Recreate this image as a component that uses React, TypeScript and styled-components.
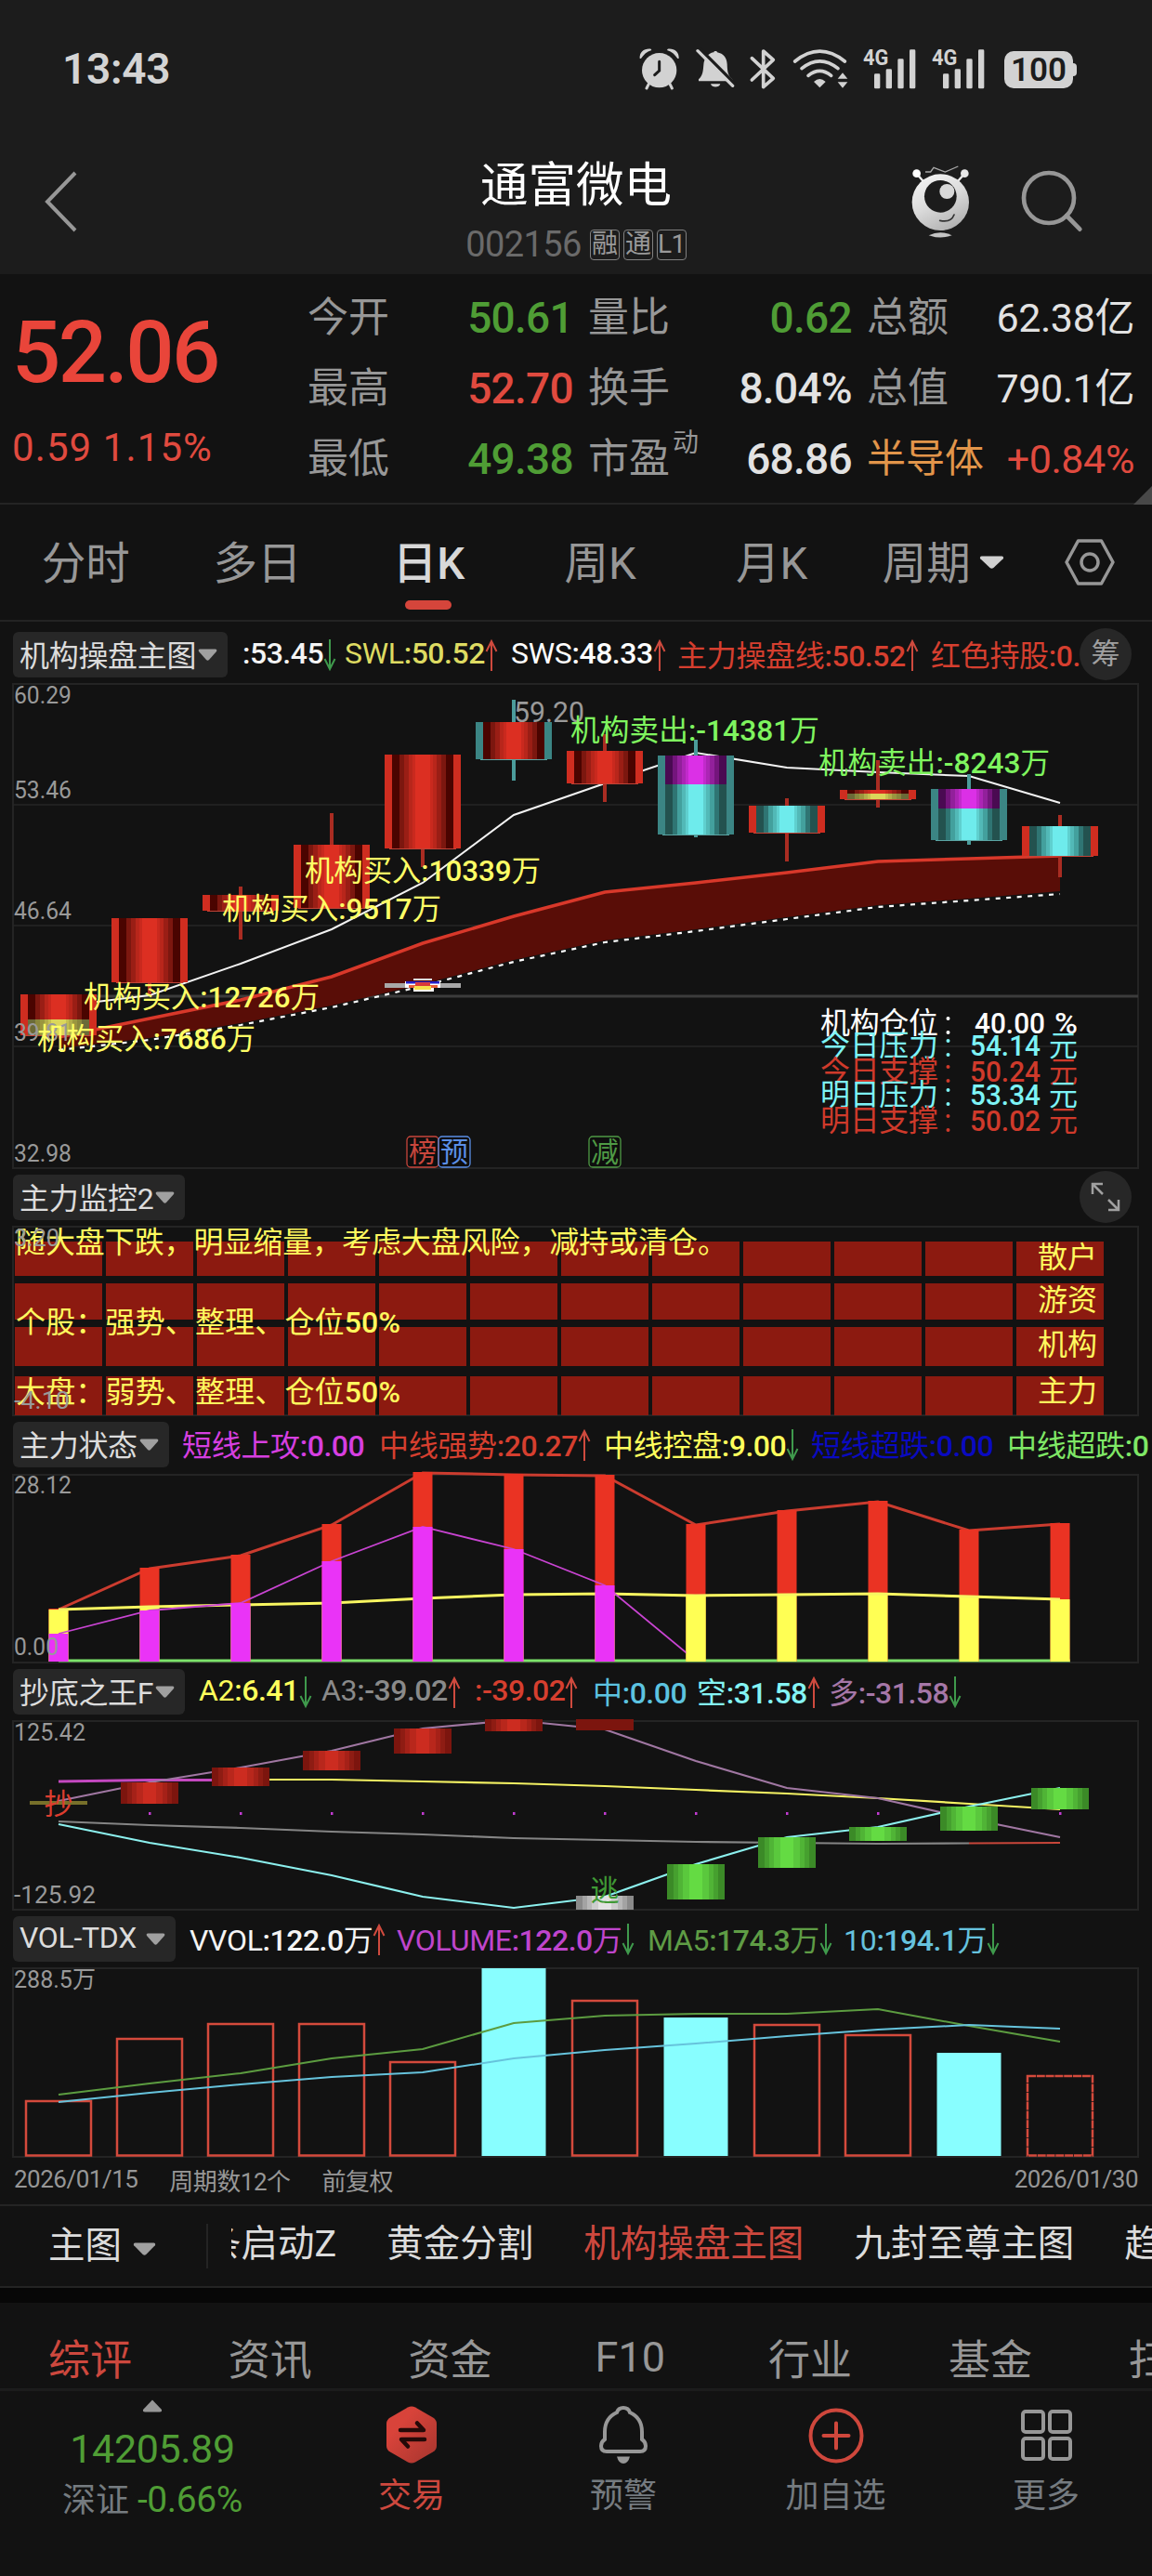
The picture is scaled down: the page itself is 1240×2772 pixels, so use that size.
import React from "react";
import styled, { createGlobalStyle } from "styled-components";

const red = "#e04a3f";
const green = "#4f9d35";
const grey = "#979797";
const font = `Roboto, "Noto Sans CJK SC", sans-serif`;

const cx = (i: number) => 63 + i * 98;
const toPoints = (ys: number[], start = 0) =>
  ys.map((y, i) => `${cx(i + start)},${y}`).join(" ");

/* ---------- chart data ---------- */

const shades: any = {
  red: ["#4a0400", "#7c170f", "#9a1e15", "#b8261b", "#c9291e", "#dc2f22"],
  cyan: ["#23524f", "#2f7573", "#43a09d", "#52b9b7", "#5fd0cf", "#6eebec"],
  purple: ["#4a0a52", "#74157c", "#92209b", "#ac25b5", "#c22acc", "#db30e6"],
  yellow: ["#6b6a38", "#8a863c", "#9b963f", "#b3ad49", "#c6c050", "#dcd65a"],
};
const shadeHalf = [33, 25, 20, 15, 11, 8];

const candles: any = [
  { hi: 1070, lo: 1114, side: "red", parts: [["red", 1070, 1097], ["yellow", 1097, 1114]] },
  { hi: 988, lo: 1070, side: "red", parts: [["red", 988, 1057]] },
  { hi: 954, lo: 1011, side: "red", parts: [["red", 963, 980]] },
  { hi: 875, lo: 977, side: "red", parts: [["red", 909, 977]] },
  { hi: 812, lo: 933, side: "red", parts: [["red", 812, 913]] },
  { hi: 753, lo: 840, side: "teal", parts: [["red", 777, 817]] },
  { hi: 790, lo: 863, side: "red", parts: [["red", 808, 843]] },
  { hi: 796, lo: 901, side: "teal", parts: [["purple", 813, 844], ["cyan", 844, 898]] },
  { hi: 859, lo: 927, side: "red", parts: [["cyan", 867, 896]] },
  { hi: 818, lo: 869, side: "red", parts: [["red", 850, 854], ["yellow", 854, 860]] },
  { hi: 833, lo: 909, side: "teal", parts: [["purple", 849, 870], ["cyan", 870, 904]] },
  { hi: 877, lo: 944, side: "red", parts: [["cyan", 889, 921]] },
];

const priceLine = [1083, 1071, 1037, 1000, 950, 877, 843, 810, 826, 831, 835, 864];
const swlLine = [1116, 1096, 1076, 1051, 1015, 986, 960, 950, 939, 927, 924, 921];
const swsLine = [1130, 1119, 1103, 1084, 1061, 1035, 1014, 1002, 989, 976, 969, 962];

const priceAxis: any = [
  ["60.29", 757],
  ["53.46", 859],
  ["46.64", 989],
  ["39.81", 1120],
  ["32.98", 1250],
];

const trades: any = [
  { x: 328, y: 948, w: 254, t: "机构买入:10339万", c: "#ffff66" },
  { x: 239, y: 989, w: 236, t: "机构买入:9517万", c: "#ffff66" },
  { x: 90, y: 1084, w: 254, t: "机构买入:12726万", c: "#ffff66" },
  { x: 40, y: 1129, w: 235, t: "机构买入:7686万", c: "#ffff66" },
  { x: 614, y: 797, w: 268, t: "机构卖出:-14381万", c: "#7ff55f" },
  { x: 881, y: 832, w: 249, t: "机构卖出:-8243万", c: "#7ff55f" },
];

const levels: any = [
  { y: 1112, t: "机构仓位", v: "40.00", u: "%", vx: 1049, c: "#ffffff" },
  { y: 1136, t: "今日压力", v: "54.14", u: "元", vx: 1044, c: "#7df3f6" },
  { y: 1164, t: "今日支撑", v: "50.24", u: "元", vx: 1044, c: "#cf3a2b" },
  { y: 1189, t: "明日压力", v: "53.34", u: "元", vx: 1044, c: "#7df3f6" },
  { y: 1217, t: "明日支撑", v: "50.02", u: "元", vx: 1044, c: "#cf3a2b" },
];

const marks: any = [
  { x: 438, t: "榜", c: "#c8463c" },
  { x: 472, t: "预", c: "#5b8fe6" },
  { x: 634, t: "减", c: "#4f9a45" },
];

const heatRows: any = [
  [1336, 37, "散户", 1364],
  [1381, 39, "游资", 1410],
  [1428, 42, "机构", 1458],
  [1481, 42, "主力", 1508],
];

const strong = [1732, 1688, 1674, 1641, 1585, 1587, 1588, 1641, 1626, 1616, 1647, 1640];
const control = [1732, 1729, 1727, 1725, 1720, 1716, 1715, 1717, 1716, 1715, 1718, 1721];
const attack = [1758, 1733, 1725, 1680, 1643, 1667, 1706, 1787];

const kingBars: any = [
  [1, 1918, 1941, "red"],
  [2, 1902, 1922, "red"],
  [3, 1884, 1905, "red"],
  [4, 1860, 1887, "red"],
  [5, 1850, 1863, "red"],
  [6, 2040, 2055, "white"],
  [7, 2006, 2044, "green"],
  [8, 1977, 2010, "green"],
  [9, 1966, 1981, "green"],
  [10, 1944, 1970, "green"],
  [11, 1924, 1947, "green"],
];
const kingShades: any = {
  red: ["#7c150e", "#8e1c13", "#a52118", "#b8271c", "#cc2c20"],
  green: ["#3b8a27", "#46a02f", "#50b436", "#5ac83d", "#64db43"],
  white: ["#8a8a8a", "#a3a3a3", "#b8b8b8", "#cdcdcd", "#e2e2e2"],
};
const kingHalf = [31, 24, 19, 14, 7];
const kingPurple = [1938, 1918, 1902, 1884, 1860, 1851, 1861, 1895, 1924, 1935, 1957, 1977];
const kingYellow = [1915, 1915, 1917, 1919, 1922, 1926, 1930, 1935, 1941, 1947];
const kingGrey = [1960, 1964, 1967, 1971, 1974, 1978, 1980, 1982, 1983, 1984, 1983.5];
const kingCyan = [1963, 1983, 1999, 2018, 2041, 2053, 2041, 2006, 1977, 1966, 1944, 1924];

const volumes: any = [
  [2261, 0], [2194, 0], [2178, 0], [2178, 0], [2219, 0], [2118, 1],
  [2153, 0], [2171, 1], [2179, 0], [2190, 0], [2209, 1], [2234, 2],
];
const ma5 = [2254, 2242, 2231, 2215, 2205, 2177, 2169, 2167, 2167, 2162, 2180, 2197];
const ma10 = [2262, 2252, 2243, 2235, 2230, 2215, 2206, 2199, 2191, 2184, 2179, 2183];

/* w is the distance to the start of the next reading */
const mainLegend: any = [
  { t: ":53.45", c: "#f4f4f4", w: 110, a: "down" },
  { t: "SWL:50.52", c: "#dedb62", w: 179, a: "up" },
  { t: "SWS:48.33", c: "#ffffff", w: 179, a: "up" },
  { t: "主力操盘线:50.52", c: "#d63f2f", w: 273, a: "up" },
  { t: "红色持股:0.", c: "#d63f2f", w: 162 },
];
const stateLegend: any = [
  { t: "短线上攻:0.00", c: "#d63fe0", w: 212 },
  { t: "中线强势:20.27", c: "#d63f2f", w: 242, a: "up" },
  { t: "中线控盘:9.00", c: "#ffff5c", w: 223, a: "down" },
  { t: "短线超跌:0.00", c: "#0a0ac0", w: 211 },
  { t: "中线超跌:0", c: "#7fe866", w: 170 },
];
const kingLegend: any = [
  { t: "A2:6.41", c: "#ffff5c", w: 132, a: "down" },
  { t: "A3:-39.02", c: "#8a8a8a", w: 165, a: "up" },
  { t: ":-39.02", c: "#d63f2f", w: 127, a: "up" },
  { t: "中:0.00", c: "#5cc3e0", w: 112 },
  { t: "空:31.58", c: "#84f4f4", w: 142, a: "up" },
  { t: "多:-31.58", c: "#a677a8", w: 150, a: "down" },
];
const volLegend: any = [
  { t: "VVOL:122.0万", c: "#f4f4f4", w: 223, a: "up" },
  { t: "VOLUME:122.0万", c: "#bf45cc", w: 270, a: "down" },
  { t: "MA5:174.3万", c: "#5f9c45", w: 211, a: "down" },
  { t: "10:194.1万", c: "#66c2de", w: 180, a: "down" },
];

/* ---------- icons ---------- */

const StatusIcons = () => (
  <svg width="260" height="46" viewBox="60 62 780 138" fill="#d2d2d2" stroke="none">
    <circle cx="125" cy="136" r="56" />
    <path d="M62 98C60 76 78 64 98 67L100 71C84 76 74 86 66 98ZM188 98C190 76 172 64 152 67L150 71C166 76 176 86 184 98Z" />
    <path d="M92 178L84 194M158 178L166 194" stroke="#d2d2d2" strokeWidth="9" strokeLinecap="round" />
    <path d="M125 108V137L110 151" fill="none" stroke="#1c1c1c" strokeWidth="9" strokeLinecap="round" />
    <path d="M252 171V165C266 152 266 138 268 118C270 96 284 80 301 78C301 73 312 73 312 78C332 82 343 96 344 116C345 142 346 152 361 165V171ZM291 180H322C319 193 294 193 291 180Z" />
    <path d="M255 66L371 182" stroke="#1c1c1c" strokeWidth="11" />
    <path d="M249 73L362 186" stroke="#d2d2d2" strokeWidth="10" strokeLinecap="round" />
    <path d="M424 97L493 162L461 190V74L493 102L424 167" fill="none" stroke="#d2d2d2" strokeWidth="11" strokeLinejoin="round" strokeLinecap="round" />
    <g fill="none" stroke="#d2d2d2" strokeWidth="11" strokeLinecap="round">
      <path d="M563 107Q643 42 724 107" />
      <path d="M585 130Q643 83 702 130" />
      <path d="M606 153Q643 123 680 153" />
    </g>
    <path d="M643 192L624 173Q643 155 662 173ZM701 163L717 144L733 163ZM701 174H733L717 193Z" />
  </svg>
);

const Signal = () => (
  <svg width="58" height="46" viewBox="782 62 174 138" fill="#d2d2d2" overflow="visible">
    <text x="782" y="120" fontSize="74" fontWeight="700" textLength="82" lengthAdjust="spacingAndGlyphs" fontFamily="Roboto">4G</text>
    <rect x="818" y="147" width="19" height="48" rx="4" />
    <rect x="856" y="132" width="19" height="63" rx="4" />
    <rect x="894" y="99" width="19" height="96" rx="4" />
    <rect x="932" y="69" width="19" height="126" rx="4" />
  </svg>
);

const Robot = () => (
  <svg width="64" height="80" viewBox="936 440 192 240">
    <defs>
      <linearGradient id="robot" x1="0.2" y1="0" x2="0.7" y2="1">
        <stop offset="0" stopColor="#f4f4f4" />
        <stop offset="0.5" stopColor="#dadada" />
        <stop offset="1" stopColor="#b0b0b0" />
      </linearGradient>
    </defs>
    <path d="M953 469L974 494M1108 469L1086 494" stroke="#eee" strokeWidth="7" />
    <circle cx="953" cy="469" r="13" fill="#fff" />
    <circle cx="1108" cy="469" r="13" fill="#e8e8e8" />
    <path d="M981 464H998L1008 450L1045 464L1087 446" fill="none" stroke="#a8a8a8" strokeWidth="4" />
    <ellipse cx="1030" cy="562" rx="92" ry="91" fill="url(#robot)" />
    <circle cx="1030" cy="543" r="52" fill="#1c1c1c" />
    <circle cx="1051" cy="527" r="24" fill="#d8d8d8" />
    <path d="M1028 621Q1064 629 1074 602" fill="none" stroke="#333" strokeWidth="5" strokeLinecap="round" />
    <path d="M992 669Q1030 650 1067 669Q1030 682 992 669Z" fill="#c4c4c4" />
  </svg>
);

const SearchIcon = () => (
  <svg width="68" height="68" viewBox="1294 459 204 204" fill="none" stroke="#979797" strokeLinecap="round">
    <circle cx="1384" cy="549" r="81" strokeWidth="14" />
    <path d="M1441 606L1484 650" strokeWidth="14" />
  </svg>
);

const Arrow = ({ dir }: any) => (
  <svg width="14" height="36" viewBox="0 0 14 36" fill="none" strokeWidth="2" stroke={dir === "up" ? "#cf4a3e" : "#3f9a4c"}>
    <path d={dir === "up" ? "M7 35V3M1.500 14L7 3L12.500 14" : "M7 1V33M1.500 22L7 33L12.500 22"} />
  </svg>
);

const Caret = ({ w = 21, h = 13, fill = "#a0a0a0" }: any) => (
  <svg width={w} height={h} viewBox="0 0 21 13" preserveAspectRatio="none">
    <path d="M2 0.500H19Q21 1 20 3L12 12Q10.500 13.500 9 12L1 3Q0 1 2 0.500Z" fill={fill} />
  </svg>
);

/* ---------- charts ---------- */

const Frame = ({ y, h }: any) => (
  <rect x="14" y={y} width="1211" height={h} fill="none" stroke="#242424" strokeWidth="2" />
);

const AxisText = ({ y, w, children }: any) => (
  <text x="15" y={y} fontSize="26" fill="#999" textLength={w} lengthAdjust="spacingAndGlyphs">{children}</text>
);

const MainChart = () => (
  <Chart height="523" viewBox="0 735 1240 523">
    <Frame y={736} h={521} />
    <path d="M14 866H1225M14 996H1225M14 1126H1225" stroke="#262626" strokeWidth="1.500" />
    <path d="M63 1072H1225" stroke="#3c3c3c" strokeWidth="3" />
    <polygon
      points={`${toPoints(swlLine)} 1141,959 ${swsLine.map((y, i) => `${cx(i)},${y - 2}`).slice(0, 11).reverse().join(" ")}`}
      fill="#590d07"
    />
    <polyline points={toPoints(swlLine)} fill="none" stroke="#d8382a" strokeWidth="3.500" />
    <polyline points={toPoints(swsLine)} fill="none" stroke="#fff" strokeWidth="2.200" strokeDasharray="5 6.500" />
    <polyline points={toPoints(priceLine)} fill="none" stroke="#f2f2f2" strokeWidth="2" />
    {candles.map((c: any, i: number) => {
      const top = c.parts[0][1];
      const bottom = c.parts[c.parts.length - 1][2];
      const teal = c.side === "teal";
      return (
        <g key={i}>
          <rect x={cx(i) - 41} y={top} width="82" height={bottom - top} fill={teal ? "#3b8584" : "#cf2d20"} />
          {c.parts.map(([tone, a, b]: any) =>
            shadeHalf.map((half, n) => (
              <rect key={tone + n} x={cx(i) - half} y={a} width={half * 2} height={b - a} fill={shades[tone][n]} />
            ))
          )}
          <path
            d={`M${cx(i)} ${c.hi}V${top}M${cx(i)} ${bottom}V${c.lo}`}
            stroke={teal ? "#4b9c9b" : "#a92c22"}
            strokeWidth="4"
          />
          <path d={`M${cx(i) - 36} ${bottom + 0.5}H${cx(i) + 36}`} stroke={teal ? "#5ba5a4" : "#c04337"} strokeWidth="1" />
        </g>
      );
    })}
    <rect x="414" y="1058" width="82" height="5" fill="#a8a8a8" />
    <path d="M436 1056H474V1063H467V1067H445V1063H436Z" fill="#fff" />
    <rect x="445" y="1053" width="20" height="2" fill="#ddd" />
    <rect x="437" y="1056" width="36" height="2.500" fill="#2320c9" />
    <rect x="440" y="1060" width="31" height="3" fill="#e8603a" />
    <rect x="447" y="1057" width="16" height="4" fill="#d93a3a" />
    <rect x="446" y="1061" width="18" height="4" fill="#f5e04a" />
    {priceAxis.map(([t, y]: any) => (
      <AxisText key={t} y={y} w={62}>{t}</AxisText>
    ))}
    <text x="553" y="777" fontSize="31" fill="#9a9a9a" textLength="76" lengthAdjust="spacingAndGlyphs">59.20</text>
    {trades.map((s: any) => (
      <text key={s.t} x={s.x} y={s.y} fontSize="32" fontWeight="500" fill={s.c} textLength={s.w} lengthAdjust="spacingAndGlyphs">
        <Cjk>{s.t.slice(0, 4)}</Cjk>{s.t.slice(4, -1)}<Cjk>万</Cjk>
      </text>
    ))}
    {levels.map((l: any) => (
      <g key={l.y} fill={l.c} fontSize="32">
        <text x="883" y={l.y} textLength="127">{l.t}</text>
        <circle cx="1020.500" cy={l.y - 16} r="2" />
        <circle cx="1020.500" cy={l.y - 1} r="2" />
        <text x={l.vx} y={l.y} fontWeight="500" textLength="76" lengthAdjust="spacingAndGlyphs">{l.v}</text>
        <text x={l.u === "%" ? 1135 : 1129} y={l.y} fontWeight={l.u === "%" ? 500 : 400} fontSize="31" textLength={l.u === "%" ? 25 : 31} lengthAdjust="spacingAndGlyphs">{l.u}</text>
      </g>
    ))}
    {marks.map((m: any) => (
      <g key={m.t}>
        <rect x={m.x} y="1223" width="34" height="33" rx="4" fill="#0b0b0b" fillOpacity="0.4" stroke={m.c} strokeWidth="1.300" />
        <text x={m.x + 17} y="1250" textAnchor="middle" fontSize="30" fill={m.c}>{m.t}</text>
      </g>
    ))}
  </Chart>
);

const MonitorChart = () => (
  <Chart height="205" viewBox="0 1319 1240 205">
    <Frame y={1320} h={203} />
    {heatRows.map(([y, h, t, ty]: any) => (
      <g key={t}>
        {candles.map((_: any, i: number) => (
          <rect key={i} x={16 + i * 98} y={y} width="94" height={h} fill="#8c1a10" />
        ))}
        <text x="1117" y={ty} fontSize="32" fill="#fff95e">{t}</text>
      </g>
    ))}
    <g fontSize="32" fill="#fff95e">
      <text x="17" y="1348" textLength="766">随大盘下跌，明显缩量，考虑大盘风险，减持或清仓。</text>
      <text x="17" y="1434" textLength="414">个股：强势、整理、仓位<Strong>50%</Strong></text>
      <text x="17" y="1509" textLength="414">大盘：弱势、整理、仓位<Strong>50%</Strong></text>
    </g>
    <AxisText y={1341} w={49}>3.20</AxisText>
    <AxisText y={1516} w={60}>-4.10</AxisText>
  </Chart>
);

const StateChart = () => (
  <Chart height="203" viewBox="0 1586 1240 203">
    <Frame y={1587} h={202} />
    <path d="M63 1787H1152" stroke="#7de36b" strokeWidth="3" />
    <polyline points={toPoints(strong)} fill="none" stroke="#cb3c2f" strokeWidth="3" />
    {strong.map((y, i) => (
      <g key={i}>
        <rect x={cx(i) - 10.5} y={y - 1} width="21" height={1789 - y} fill="#ea3323" />
        <rect x={cx(i) - 10.5} y={control[i]} width="21" height={1788 - control[i]} fill="#ffff54" />
      </g>
    ))}
    <polyline points={toPoints(control)} fill="none" stroke="#f8f660" strokeWidth="3" />
    <polyline points={toPoints(attack)} fill="none" stroke="#c944d2" strokeWidth="1.800" />
    {attack.slice(0, 7).map((y, i) => (
      <rect key={i} x={cx(i) - 10.5} y={y} width="21" height={1788 - y} fill="#ea33f7" />
    ))}
    <rect x="738.500" y="1717" width="21" height="71" fill="#ffff54" />
    <AxisText y={1607} w={62}>28.12</AxisText>
    <AxisText y={1781} w={48}>0.00</AxisText>
  </Chart>
);

const KingChart = () => (
  <Chart height="205" viewBox="0 1851 1240 205">
    <Frame y={1852} h={203} />
    <g fill="none" strokeWidth="2.200">
      <polyline points={toPoints(kingYellow, 2)} stroke="#f4f263" />
      <polyline points="63,1917 161,1915.500 259,1915.500" stroke="#c448c0" strokeWidth="3" />
      <polyline points={toPoints(kingPurple)} stroke="#a077a2" />
      <polyline points={toPoints(kingGrey)} stroke="#858585" />
      <path d="M1043 1983.500L1141 1983" stroke="#c8463a" />
      <polyline points={toPoints(kingCyan)} stroke="#8cf0ee" />
    </g>
    {candles.slice(1).map((_: any, i: number) => (
      <rect key={i} x={cx(i + 1) - 1} y="1950" width="2.500" height="3" fill="#c03ad0" />
    ))}
    <rect x="32" y="1938" width="62" height="4" fill="#77702a" />
    {kingBars.map(([i, a, b, tone]: any) =>
      kingHalf.map((half, n) => (
        <rect key={i + "-" + n} x={cx(i) - half} y={a} width={half * 2} height={b - a} fill={kingShades[tone][n]} />
      ))
    )}
    <rect x="620" y="1850" width="62" height="12" fill="#7c150e" />
    <text x="63" y="1952" textAnchor="middle" fontSize="31" fill="#dd3d2f">抄</text>
    <text x="651" y="2045" textAnchor="middle" fontSize="31" fill="#3f9a35">逃</text>
    <AxisText y={1873} w={77}>125.42</AxisText>
    <AxisText y={2048} w={88}>-125.92</AxisText>
  </Chart>
);

const VolumeChart = () => (
  <Chart height="204" viewBox="0 2118 1240 204">
    <Frame y={2118} h={203} />
    {volumes.map(([y, kind]: any, i: number) =>
      kind === 1 ? (
        <rect key={i} x={cx(i) - 34.5} y={y} width="69" height={2320 - y} fill="#88feff" />
      ) : (
        <rect
          key={i}
          x={cx(i) - 35}
          y={y}
          width="70"
          height={2319.5 - y}
          fill="none"
          stroke="#d44a3c"
          strokeWidth="2.500"
          strokeDasharray={kind === 2 ? "9 0.8" : undefined}
        />
      )
    )}
    <polyline points={toPoints(ma5)} fill="none" stroke="#5c9c40" strokeWidth="2" />
    <polyline points={toPoints(ma10)} fill="none" stroke="#66c3dc" strokeWidth="2" />
    <AxisText y={2139} w={88}>288.5万</AxisText>
  </Chart>
);

const Legend = ({ name, w, items, top = 6, gap, children, height = 62 }: any) => (
  <LegendRow $top={top} $height={height}>
    <IndicatorTag $w={w}>
      <span>{name}</span>
      <Caret />
    </IndicatorTag>
    <Readings $gap={gap}>
      {items.map((el: any) => {
        const [label, value] = el.t.split(":");
        return (
          <Reading key={el.t} $color={el.c} $w={el.w}>
            <span>
              {label}
              <b>:{value.replace("万", "")}</b>
              {value.endsWith("万") && "万"}
            </span>
            {el.a && <Arrow dir={el.a} />}
          </Reading>
        );
      })}
    </Readings>
    {children}
  </LegendRow>
);

const App = () => {
  return (
    <Page>
      <GlobalStyle />
      <Header>
        <StatusBar>
          <Clock>13:43</Clock>
          <StatusRight>
            <StatusIcons />
            <Signal />
            <Signal />
            <Battery>100</Battery>
          </StatusRight>
        </StatusBar>
        <NavBar>
          <Back>
            <svg width="36" height="66" viewBox="0 0 36 66" fill="none" stroke="#979797" strokeWidth="4">
              <path d="M33 2L3 33L33 64" />
            </svg>
          </Back>
          <Heading>
            <Title>通富微电</Title>
            <Code>
              002156
              <CodeTag>融</CodeTag>
              <CodeTag>通</CodeTag>
              <CodeTag>L1</CodeTag>
            </Code>
          </Heading>
          <NavActions>
            <Robot />
            <SearchIcon />
          </NavActions>
        </NavBar>
      </Header>

      <Quote>
        <PriceBox>
          <Price>52.06</Price>
          <Change>0.59 1.15%</Change>
        </PriceBox>
        <Stats>
          <Label>今开</Label>
          <Value $color={green}>50.61</Value>
          <Label>量比</Label>
          <Value $color={green}>0.62</Value>
          <Label>总额</Label>
          <Value $small>62.38亿</Value>
          <Label>最高</Label>
          <Value $color={red}>52.70</Value>
          <Label>换手</Label>
          <Value>8.04%</Value>
          <Label>总值</Label>
          <Value $small>790.1亿</Value>
          <Label>最低</Label>
          <Value $color={green}>49.38</Value>
          <Label>
            市盈<sup>动</sup>
          </Label>
          <Value>68.86</Value>
          <Label $sector>半导体</Label>
          <Value $small $color={red}>+0.84%</Value>
        </Stats>
        <Corner />
      </Quote>

      <PeriodTabs>
        <Period>分时</Period>
        <Period>多日</Period>
        <Period $active>日K</Period>
        <Period>周K</Period>
        <Period>月K</Period>
        <Period>
          周期
          <Caret w={27} h={14} fill="#d0d0d0" />
        </Period>
        <PeriodSettings>
          <svg width="54" height="50" viewBox="0 0 54 50" fill="none" stroke="#979797" strokeWidth="3.500" strokeLinejoin="round">
            <path d="M14.500 2H39.500L52 25L39.500 48H14.500L2 25Z" />
            <circle cx="27" cy="25" r="9" />
          </svg>
        </PeriodSettings>
      </PeriodTabs>

      <Legend name="机构操盘主图" w={231} items={mainLegend} top={11} height={66} gap={16}>
        <Round>筹</Round>
      </Legend>
      <MainChart />
      <Legend name="主力监控2" w={185} items={[]} height={61}>
        <Round>
          <svg width="32" height="32" viewBox="0 0 32 32" fill="none" stroke="#a0a0a0" strokeWidth="2.500">
            <path d="M2 13V2H13M2 2L13 13M30 19V30H19M30 30L19 19" />
          </svg>
        </Round>
      </Legend>
      <MonitorChart />
      <Legend name="主力状态" w={168} items={stateLegend} gap={14} />
      <StateChart />
      <Legend name="抄底之王F" w={185} items={kingLegend} gap={15} top={7} />
      <KingChart />
      <Legend name="VOL-TDX" w={175} items={volLegend} gap={15} />
      <VolumeChart />
      <DateRow>
        <span>2026/01/15</span>
        <span>周期数12个</span>
        <span>前复权</span>
        <LastDate>2026/01/30</LastDate>
      </DateRow>

      <PresetBar>
        <PresetMenu>
          主图
          <Caret w={25} h={14} />
        </PresetMenu>
        <PresetList>
          <Preset $cut>条启动Z</Preset>
          <Preset>黄金分割</Preset>
          <Preset $active>机构操盘主图</Preset>
          <Preset>九封至尊主图</Preset>
          <Preset>趋</Preset>
        </PresetList>
      </PresetBar>

      <InfoTabs>
        <InfoTab $active>综评</InfoTab>
        <InfoTab>资讯</InfoTab>
        <InfoTab>资金</InfoTab>
        <InfoTab>F10</InfoTab>
        <InfoTab>行业</InfoTab>
        <InfoTab>基金</InfoTab>
        <InfoTab>扫雷</InfoTab>
      </InfoTabs>

      <BottomBar>
        <IndexBox>
          <svg width="22" height="14" viewBox="0 0 22 14">
            <path d="M11 0.500L21 11Q21.500 13.500 19 13.500H3Q0.500 13.500 1 11Z" fill="#979797" />
          </svg>
          <IndexValue>14205.89</IndexValue>
          <IndexName>
            深证 <span>-0.66%</span>
          </IndexName>
        </IndexBox>
        <Action $w={230} $active>
          <svg width="56" height="62" viewBox="0 0 56 62">
            <defs>
              <linearGradient id="trade" x1="0" y1="0" x2="1" y2="1">
                <stop offset="0.300" stopColor="#d8433a" />
                <stop offset="1" stopColor="#a5352e" />
              </linearGradient>
            </defs>
            <path d="M24 1.500Q28 -0.500 32 1.500L51 12.500Q55 15 55 19V43Q55 47 51 49.500L32 60.500Q28 62.500 24 60.500L5 49.500Q1 47 1 43V19Q1 15 5 12.500Z" fill="url(#trade)" />
            <path d="M16 26H41L34 18.500M42 36H17L24 43.500" fill="none" stroke="#240a08" strokeWidth="4.500" strokeLinecap="round" strokeLinejoin="round" />
          </svg>
          交易
        </Action>
        <Action $w={226}>
          <svg width="52" height="62" viewBox="0 0 52 62" fill="none" stroke="#979797" strokeWidth="4">
            <path d="M26 2C22 2 20 4 19 7C10 11 6 18 6 28V36C3 38 2 40 2 43Q2 49 8 49H44Q50 49 50 43C50 40 49 38 46 36V28C46 18 42 11 33 7C32 4 30 2 26 2Z" />
            <path d="M19 54.500H33Q31 62 26 62Q21 62 19 54.500Z" fill="#979797" stroke="none" />
          </svg>
          预警
        </Action>
        <Action $w={231}>
          <svg width="60" height="62" viewBox="0 0 60 62" fill="none" stroke="#cf473c" strokeWidth="4" strokeLinecap="round">
            <circle cx="30" cy="32" r="27.500" />
            <path d="M30 18.500V45.500M16.500 32H43.500" />
          </svg>
          加自选
        </Action>
        <Action $w={222}>
          <svg width="56" height="62" viewBox="0 0 56 62" fill="none" stroke="#979797" strokeWidth="4">
            <rect x="3" y="6" width="22" height="22" rx="3" />
            <rect x="32" y="6" width="22" height="22" rx="3" />
            <rect x="3" y="35" width="22" height="22" rx="3" />
            <rect x="32" y="35" width="22" height="22" rx="3" />
          </svg>
          更多
        </Action>
      </BottomBar>
    </Page>
  );
};

export default App;

const GlobalStyle = createGlobalStyle`
  * {
    box-sizing: border-box;
  }

  body {
    margin: 0;
    background: #121212;
    font-family: ${font};
  }

  svg {
    display: block;
    flex-shrink: 0;
  }
`;

const Page = styled.div`
  width: 1240px;
  height: 2772px;
  overflow: hidden;
  background: #121212;
  color: #dcdcdc;
  white-space: nowrap;
`;

const Header = styled.div`
  height: 295px;
  background: #1c1c1c;
`;

const StatusBar = styled.div`
  height: 148px;
  padding: 0 81px 0 67px;
  display: flex;
  justify-content: space-between;
  align-items: center;
`;

const Clock = styled.div`
  font-size: 46px;
  font-weight: 600;
  letter-spacing: -0.3px;
  color: #d4d4d4;
`;

const StatusRight = styled.div`
  display: flex;
  align-items: center;
  gap: 16px;

  svg:first-child {
    margin-right: -35px;
  }
`;

const Battery = styled.div`
  position: relative;
  width: 74px;
  height: 40px;
  margin: 2px 4px 0 4px;
  border-radius: 10px;
  background: #d2d2d2;
  color: #1c1c1c;
  font-size: 35px;
  font-weight: 600;
  line-height: 41px;
  text-align: center;

  &::after {
    content: "";
    position: absolute;
    right: -4px;
    top: 13px;
    width: 5px;
    height: 14px;
    border-radius: 0 4px 4px 0;
    background: #d2d2d2;
  }
`;

const NavBar = styled.div`
  height: 147px;
  display: grid;
  grid-template-columns: 400px 440px 400px;
`;

const Back = styled.div`
  padding: 36px 0 0 48px;
`;

const Heading = styled.div`
  display: flex;
  flex-direction: column;
  align-items: center;
`;

const Title = styled.div`
  margin-top: 22px;
  font-size: 51.5px;
  line-height: 60px;
  color: #fff;
`;

const Code = styled.div`
  margin-top: 16px;
  display: flex;
  align-items: center;
  font-size: 38px;
  line-height: 34px;
  letter-spacing: -0.6px;
  color: #6a6a6a;
`;

const CodeTag = styled.span`
  width: 32px;
  height: 33px;
  margin-left: 4px;
  border: 1.5px solid #808080;
  border-radius: 4px;
  display: flex;
  justify-content: center;
  align-items: center;
  font-size: 28px;
  line-height: 28px;
  color: #999;

  &:first-of-type {
    margin-left: 9px;
  }
`;

const NavActions = styled.div`
  display: flex;
  align-items: flex-start;
  justify-content: flex-end;
  gap: 54px;
  padding: 29px 73px 0 0;

  svg:last-child {
    margin-top: 6px;
  }
`;

const Quote = styled.div`
  position: relative;
  height: 248px;
  display: flex;
  border-bottom: 2px solid #242424;
`;

const PriceBox = styled.div`
  width: 331px;
  padding: 35px 0 0 13px;
`;

const Price = styled.div`
  font-size: 92px;
  line-height: 100px;
  font-weight: 500;
  letter-spacing: -2.6px;
  color: #e9453a;
`;

const Change = styled.div`
  margin-top: 27px;
  font-size: 42px;
  line-height: 50px;
  letter-spacing: 1.1px;
  color: ${red};
`;

const Stats = styled.div`
  width: 890px;
  padding-top: 9px;
  display: grid;
  grid-template-columns: 130px 172px 116px 184px 126px 162px;
  grid-auto-rows: 76px;
  align-items: center;
`;

const Label = styled.div<{ $sector?: boolean }>`
  font-size: ${({ $sector }) => ($sector ? 42 : 44)}px;
  line-height: 60px;
  color: ${({ $sector }) => ($sector ? "#e2954a" : grey)};

  sup {
    position: relative;
    top: -23px;
    left: 3px;
    font-size: 28px;
    line-height: 0;
    vertical-align: baseline;
  }
`;

const Value = styled.div<{ $color?: string; $small?: boolean }>`
  padding-right: ${({ $small }) => ($small ? 0 : 16)}px;
  text-align: right;
  font-size: ${({ $small }) => ($small ? 43 : 46)}px;
  line-height: 60px;
  font-weight: ${({ $small }) => ($small ? 400 : 500)};
  letter-spacing: ${({ $small }) => ($small ? -0.4 : -0.7)}px;
  color: ${({ $color }) => $color || "#e2e2e2"};
`;

const Corner = styled.div`
  position: absolute;
  right: 0;
  bottom: -2px;
  border-style: solid;
  border-width: 0 0 20px 20px;
  border-color: transparent transparent #484848 transparent;
`;

const PeriodTabs = styled.div`
  height: 126px;
  display: flex;
  border-bottom: 2px solid #242424;
`;

const Period = styled.div<{ $active?: boolean }>`
  position: relative;
  width: 184.6px;
  height: 124px;
  padding-bottom: 6px;
  display: flex;
  justify-content: center;
  align-items: center;
  gap: 9px;
  font-size: 47.5px;
  color: ${({ $active }) => ($active ? "#d8d8d8" : grey)};
  font-weight: ${({ $active }) => ($active ? 500 : 400)};

  svg {
    margin-top: 6px;
  }

  &::after {
    content: "";
    display: ${({ $active }) => ($active ? "block" : "none")};
    position: absolute;
    left: 67px;
    bottom: 11px;
    width: 50px;
    height: 10px;
    border-radius: 5px;
    background: #d5453b;
  }
`;

const PeriodSettings = styled.div`
  width: 131px;
  display: flex;
  justify-content: center;
  align-items: center;
`;

const LegendRow = styled.div<{ $top: number; $height: number }>`
  position: relative;
  height: ${({ $height }) => $height}px;
  padding: ${({ $top }) => $top}px 0 0 14px;
  display: flex;
  align-items: flex-start;
`;

const IndicatorTag = styled.div<{ $w: number }>`
  width: ${({ $w }) => $w}px;
  height: 49px;
  padding: 0 11px 0 7px;
  border-radius: 6px;
  background: #272727;
  display: flex;
  align-items: center;
  justify-content: space-between;
  flex-shrink: 0;
  font-size: 32px;
  letter-spacing: -0.3px;
  color: #dcdcdc;

  span {
    position: relative;
    top: -2px;
  }
`;

const Readings = styled.div<{ $gap?: number }>`
  flex: 1;
  min-width: 0;
  overflow: hidden;
  margin-left: ${({ $gap }) => $gap || 0}px;
  height: 49px;
  display: flex;
`;

const Reading = styled.div<{ $color: string; $w: number }>`
  width: ${({ $w }) => $w}px;
  flex-shrink: 0;
  display: flex;
  align-items: center;
  font-size: 32px;
  letter-spacing: -0.3px;
  color: ${({ $color }) => $color};

  span {
    position: relative;
    top: -2px;
  }

  b {
    font-weight: 500;
    letter-spacing: -0.5px;
  }
`;

const Round = styled.div`
  width: 56px;
  height: 56px;
  margin: -4px 22px 0 0;
  border-radius: 50%;
  background: #272727;
  color: #a0a0a0;
  font-size: 31px;
  line-height: 50px;
  display: flex;
  justify-content: center;
  align-items: center;
  flex-shrink: 0;
`;

const Chart = styled.svg`
  width: 1240px;
  overflow: visible;
  font-family: ${font};
`;

const Cjk = styled.tspan`
  font-weight: 400;
`;

const Strong = styled.tspan`
  font-weight: 500;
`;

const DateRow = styled.div`
  height: 50px;
  padding: 0 15px 4px;
  display: flex;
  align-items: center;
  gap: 34px;
  font-size: 26px;
  letter-spacing: -0.5px;
  color: ${grey};
`;

const LastDate = styled.span`
  margin-left: auto;
`;

const PresetBar = styled.div`
  height: 90px;
  border-top: 2px solid #242424;
  border-bottom: 2px solid #242424;
  display: flex;
  align-items: center;
  font-size: 39.5px;
  line-height: 48px;
`;

const PresetMenu = styled.div`
  width: 224px;
  height: 48px;
  padding-left: 52px;
  border-right: 2px solid #242424;
  display: flex;
  align-items: center;
  gap: 12px;

  svg {
    margin-top: 6px;
  }
`;

const PresetList = styled.div`
  width: 991px;
  margin: -4px 0 0 25px;
  display: flex;
  gap: 54px;
  overflow: hidden;
`;

const Preset = styled.div<{ $active?: boolean; $cut?: boolean }>`
  flex-shrink: 0;
  margin-left: ${({ $cut }) => ($cut ? -29 : 0)}px;
  color: ${({ $active }) => ($active ? "#cd483e" : "#dcdcdc")};
`;

const InfoTabs = styled.div`
  height: 111px;
  border-top: 16px solid #070707;
  border-bottom: 3px solid #1c1c1c;
  display: flex;
`;

const InfoTab = styled.div<{ $active?: boolean }>`
  width: 193.8px;
  height: 117px;
  flex-shrink: 0;
  display: flex;
  justify-content: center;
  align-items: center;
  font-size: 45px;
  color: ${({ $active }) => ($active ? "#cd483e" : grey)};
`;

const BottomBar = styled.div`
  display: flex;
`;

const IndexBox = styled.div`
  width: 328px;
  padding-top: 9px;
  display: flex;
  flex-direction: column;
  align-items: center;
`;

const IndexValue = styled.div`
  margin-top: 14px;
  font-size: 43px;
  line-height: 50px;
  letter-spacing: -0.4px;
  color: ${green};
`;

const IndexName = styled.div`
  margin-top: 5px;
  font-size: 36px;
  line-height: 50px;
  color: #757b80;

  span {
    font-size: 39px;
    letter-spacing: -0.4px;
    color: ${green};
  }
`;

const Action = styled.div<{ $w: number; $active?: boolean }>`
  width: ${({ $w }) => $w}px;
  padding-top: 16px;
  display: flex;
  flex-direction: column;
  align-items: center;
  gap: 10px;
  font-size: 36px;
  line-height: 50px;
  color: ${({ $active }) => ($active ? "#cd483e" : "#757b80")};
`;
